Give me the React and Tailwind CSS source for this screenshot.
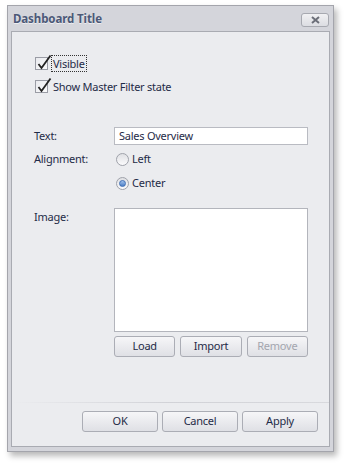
import React from 'react';

const font = { fontFamily: '"Noto Sans", "Open Sans", sans-serif' };

function CheckBox({ label, focused }) {
  return (
    <div className="flex h-[20px] items-center">
      <span className="relative flex h-[13px] w-[13px] shrink-0 border border-[#9a9ca5] bg-gradient-to-br from-[#e9eaee] to-[#fafafb]">
        <svg className="absolute -top-[4px] left-[1px]" width="15" height="17" viewBox="0 0 15 17">
          <path d="M1.5 10 L4.5 14 L13.5 1.5" fill="none" stroke="#222" strokeWidth="1.8" />
        </svg>
      </span>
      <span
        className={
          'ml-[3px] px-[1px] leading-[15px] ' +
          (focused ? 'border border-dotted border-[#333]' : 'border border-transparent')
        }
      >
        {label}
      </span>
    </div>
  );
}

function Radio({ label, checked }) {
  return (
    <div className="flex h-[18px] items-center">
      <span className="flex h-[13px] w-[13px] shrink-0 items-center justify-center rounded-full border border-[#9fa2aa] bg-gradient-to-b from-[#dfe0e4] to-[#fbfbfc]">
        {checked && (
          <span className="h-[7px] w-[7px] rounded-full border border-[#3f6fb5] bg-gradient-to-b from-[#9fc0ec] to-[#4d7fc6]" />
        )}
      </span>
      <span className="ml-[3px]">{label}</span>
    </div>
  );
}

function Button({ children, disabled, className = '' }) {
  return (
    <div
      className={
        'flex h-[21px] items-center justify-center rounded-[3px] border border-[#abadb5] bg-gradient-to-b from-[#f6f6f8] to-[#dfe0e5] ' +
        (disabled ? 'text-[#a3a6ae] ' : 'text-[#1f2b47] ') +
        className
      }
    >
      {children}
    </div>
  );
}

export default function App() {
  return (
    <div className="min-h-[467px] bg-white pl-[7px] pt-[5px]" style={font}>
      <div className="flex h-[447px] w-[327px] flex-col border border-[#a4a5ac] bg-[#d4d5db] shadow-[3px_4px_6px_rgba(0,0,0,0.28)]">

        {/* Title bar */}
        <div className="flex h-[25px] shrink-0 items-center justify-between pl-[5px] pr-[4px]">
          <span className="text-[11.5px] font-bold tracking-[-0.1px] text-[#4b5877] [text-shadow:0_1px_0_rgba(255,255,255,0.6)]">
            Dashboard Title
          </span>
          <div className="mt-[2px] flex h-[14px] w-[28px] items-center justify-center rounded-[3px] border border-[#a7a9b0] bg-gradient-to-b from-[#f1f1f3] to-[#dcdde2]">
            <svg width="9" height="8" viewBox="0 0 9 8">
              <path d="M1 1 L8 7 M8 1 L1 7" stroke="#6b6e78" strokeWidth="2" />
            </svg>
          </div>
        </div>

        {/* Content */}
        <div className="mx-[3px] mb-[4px] flex flex-1 flex-col border border-[#a9abb2] bg-[#ebecef] text-[11px] tracking-[-0.25px] text-[#1f2b47]">
          <div className="pl-[23px] pt-[21px]">
            <CheckBox label="Visible" focused />
            <div className="mt-[3px]">
              <CheckBox label="Show Master Filter state" />
            </div>
          </div>

          <div className="mt-[31px] grid grid-cols-[80px_194px] gap-y-[5px] pl-[22px]">
            <div className="flex h-[18px] items-center">Text:</div>
            <div className="flex h-[18px] items-center border border-[#b9bbc2] bg-white px-[4px]">Sales Overview</div>

            <div className="flex h-[18px] items-center">Alignment:</div>
            <div className="pl-[2px]">
              <Radio label="Left" />
              <div className="mt-[6px]">
                <Radio label="Center" checked />
              </div>
            </div>

            <div className="mt-[11px] pt-[1px]">Image:</div>
            <div className="mt-[11px]">
              <div className="h-[124px] border border-[#b3b5bc] bg-white" />
              <div className="mt-[4px] grid grid-cols-3 gap-x-[5px]">
                <Button>Load</Button>
                <Button>Import</Button>
                <Button disabled>Remove</Button>
              </div>
            </div>
          </div>

          <div className="mt-[45px] h-px bg-gradient-to-r from-transparent via-[#d1d2d7] to-[#d8d9dd]" />

          <div className="mt-[8px] flex justify-end gap-x-[4px] pr-[11px]">
            <Button className="w-[76px]">OK</Button>
            <Button className="w-[76px]">Cancel</Button>
            <Button className="w-[76px]">Apply</Button>
          </div>
        </div>
      </div>
    </div>
  );
}
